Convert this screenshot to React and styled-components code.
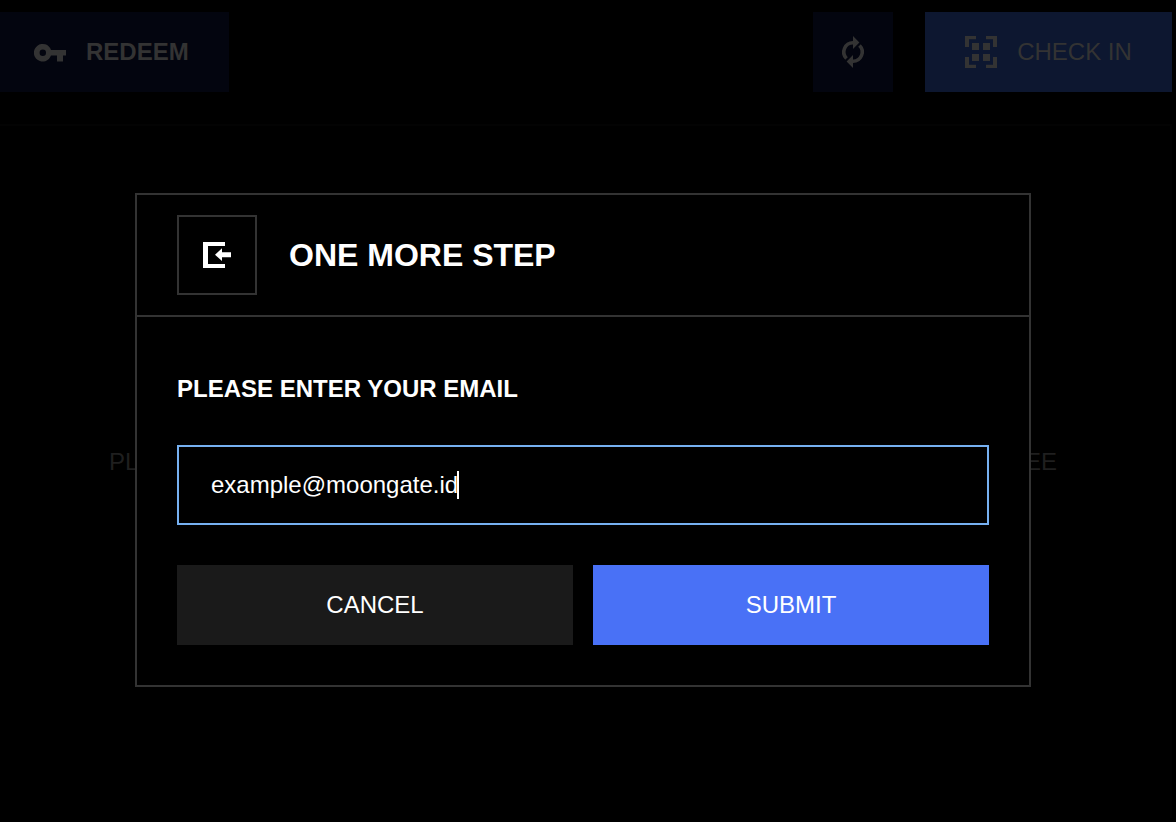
import React from "react";
import styled, { createGlobalStyle } from "styled-components";

const GlobalStyle = createGlobalStyle`
  *, *::before, *::after { box-sizing: border-box; }
  body {
    margin: 0;
    background: #000;
    color: #fff;
    font-family: "Liberation Sans", Helvetica, Arial, sans-serif;
    font-size: 24px;
  }
  button, input { font: inherit; }
`;

const Page = styled.div`
  position: relative;
  width: 1176px;
  height: 822px;
  overflow: hidden;
  display: flex;
  flex-direction: column;
  background: #000;
`;

const Toolbar = styled.header`
  display: flex;
  align-items: center;
  height: 124px;
  padding: 12px 4px 32px 0;
`;

const ToolButton = styled.button`
  display: flex;
  align-items: center;
  justify-content: center;
  gap: 20px;
  width: ${(p) => p.$width}px;
  height: 80px;
  padding: 0;
  border: 0;
  color: #333;
  background: ${(p) => (p.$primary ? "#0d1730" : "#03050f")};
  font-weight: ${(p) => (p.$bold ? 700 : 400)};
  white-space: nowrap;

  & + & { margin-left: 32px; }
`;

const RedeemButton = styled(ToolButton)`
  justify-content: flex-start;
  padding-left: 34px;
  margin-right: auto;
`;

const Scanner = styled.main`
  flex: 1;
  display: flex;
  align-items: center;
  justify-content: space-between;
  margin: 0 4px 4px 0;
  padding: 0 113px 20px 109px;
  border-top: 2px solid #030303;
  border-right: 2px solid #030303;
  color: #1f1f1f;
`;

const Overlay = styled.div`
  position: absolute;
  inset: 0;
  display: flex;
  align-items: flex-start;
  padding: 193px 0 0 135px;
`;

const Dialog = styled.section`
  width: 896px;
  border: 2px solid #333;
  background: #000;
`;

const DialogHeader = styled.div`
  display: flex;
  align-items: center;
  gap: 32px;
  height: 122px;
  padding: 0 40px;
  border-bottom: 2px solid #333;
`;

const IconFrame = styled.div`
  display: flex;
  align-items: center;
  justify-content: center;
  width: 80px;
  height: 80px;
  border: 2px solid #333;
`;

const Title = styled.h1`
  margin: 0;
  font-size: 32px;
  line-height: 40px;
  font-weight: 700;
`;

const Form = styled.div`
  display: flex;
  flex-direction: column;
  padding: 40px;
`;

const Label = styled.div`
  margin-bottom: 24px;
  line-height: 64px;
  font-weight: 700;
`;

const Field = styled.div`
  display: flex;
  align-items: center;
  height: 80px;
  padding: 0 32px;
  border: 2px solid #76b0f1;
`;

const Caret = styled.span`
  width: 2px;
  height: 28px;
  margin-left: -1px;
  background: #fff;
`;

const Actions = styled.div`
  display: grid;
  grid-template-columns: 1fr 1fr;
  gap: 20px;
  margin-top: 40px;
`;

const ActionButton = styled.button`
  height: 80px;
  padding: 0;
  border: 0;
  color: #fff;
  background: ${(p) => (p.$primary ? "#4971f6" : "#1a1a1a")};
`;

const KeyIcon = () => (
  <svg width="32" height="20" viewBox="0 0 32 20" fill="currentColor">
    <path
      fillRule="evenodd"
      d="M17 7.9H32V13.6H29V19.5H23V13.6H17A8.8 8.8 0 1 1 17 7.9ZM8.8 7.6A3.2 3.2 0 1 0 8.8 14A3.2 3.2 0 1 0 8.8 7.6Z"
    />
  </svg>
);

const RenewIcon = () => (
  <svg width="32" height="32" viewBox="0 0 32 32">
    <g fill="none" stroke="currentColor" strokeWidth="3.6">
      <path d="M16.2 6.8A9.2 9.2 0 0 0 9.5 22.5" />
      <path d="M15.8 25.2A9.2 9.2 0 0 0 22.5 9.5" />
    </g>
    <path fill="currentColor" d="M16 0L22.4 6.6L16 13ZM16 32L9.6 25.4L16 19Z" />
  </svg>
);

const ScanIcon = () => (
  <svg width="32" height="32" viewBox="0 0 32 32" fill="currentColor">
    <path d="M0 0H11V3.3H4V11H0ZM21 0H32V11H28V3.3H21ZM0 21H4V28.7H11V32H0ZM28 21H32V32H21V28.7H28Z" />
    <path d="M7 7h7v7H7zM18 7h7v7h-7zM7 18h7v7H7zM18 18h7v7h-7z" />
  </svg>
);

const EnterIcon = () => (
  <svg width="28" height="26" viewBox="0 0 28 26" fill="currentColor">
    <path d="M0 0H22V4H5V22H22V26H0Z" />
    <path d="M12 12.7L19 6.3V10.2H28V15.2H19V19Z" />
  </svg>
);

export default function App() {
  return (
    <>
      <GlobalStyle />
      <Page>
        <Toolbar>
          <RedeemButton $width={229} $bold>
            <KeyIcon />
            REDEEM
          </RedeemButton>
          <ToolButton $width={80} aria-label="Refresh">
            <RenewIcon />
          </ToolButton>
          <ToolButton $width={247} $primary>
            <ScanIcon />
            CHECK IN
          </ToolButton>
        </Toolbar>
        <Scanner>
          <span>PL</span>
          <span>EE</span>
        </Scanner>
        <Overlay>
          <Dialog role="dialog">
            <DialogHeader>
              <IconFrame>
                <EnterIcon />
              </IconFrame>
              <Title>ONE MORE STEP</Title>
            </DialogHeader>
            <Form>
              <Label>PLEASE ENTER YOUR EMAIL</Label>
              <Field>
                example@moongate.id
                <Caret />
              </Field>
              <Actions>
                <ActionButton>CANCEL</ActionButton>
                <ActionButton $primary>SUBMIT</ActionButton>
              </Actions>
            </Form>
          </Dialog>
        </Overlay>
      </Page>
    </>
  );
}
